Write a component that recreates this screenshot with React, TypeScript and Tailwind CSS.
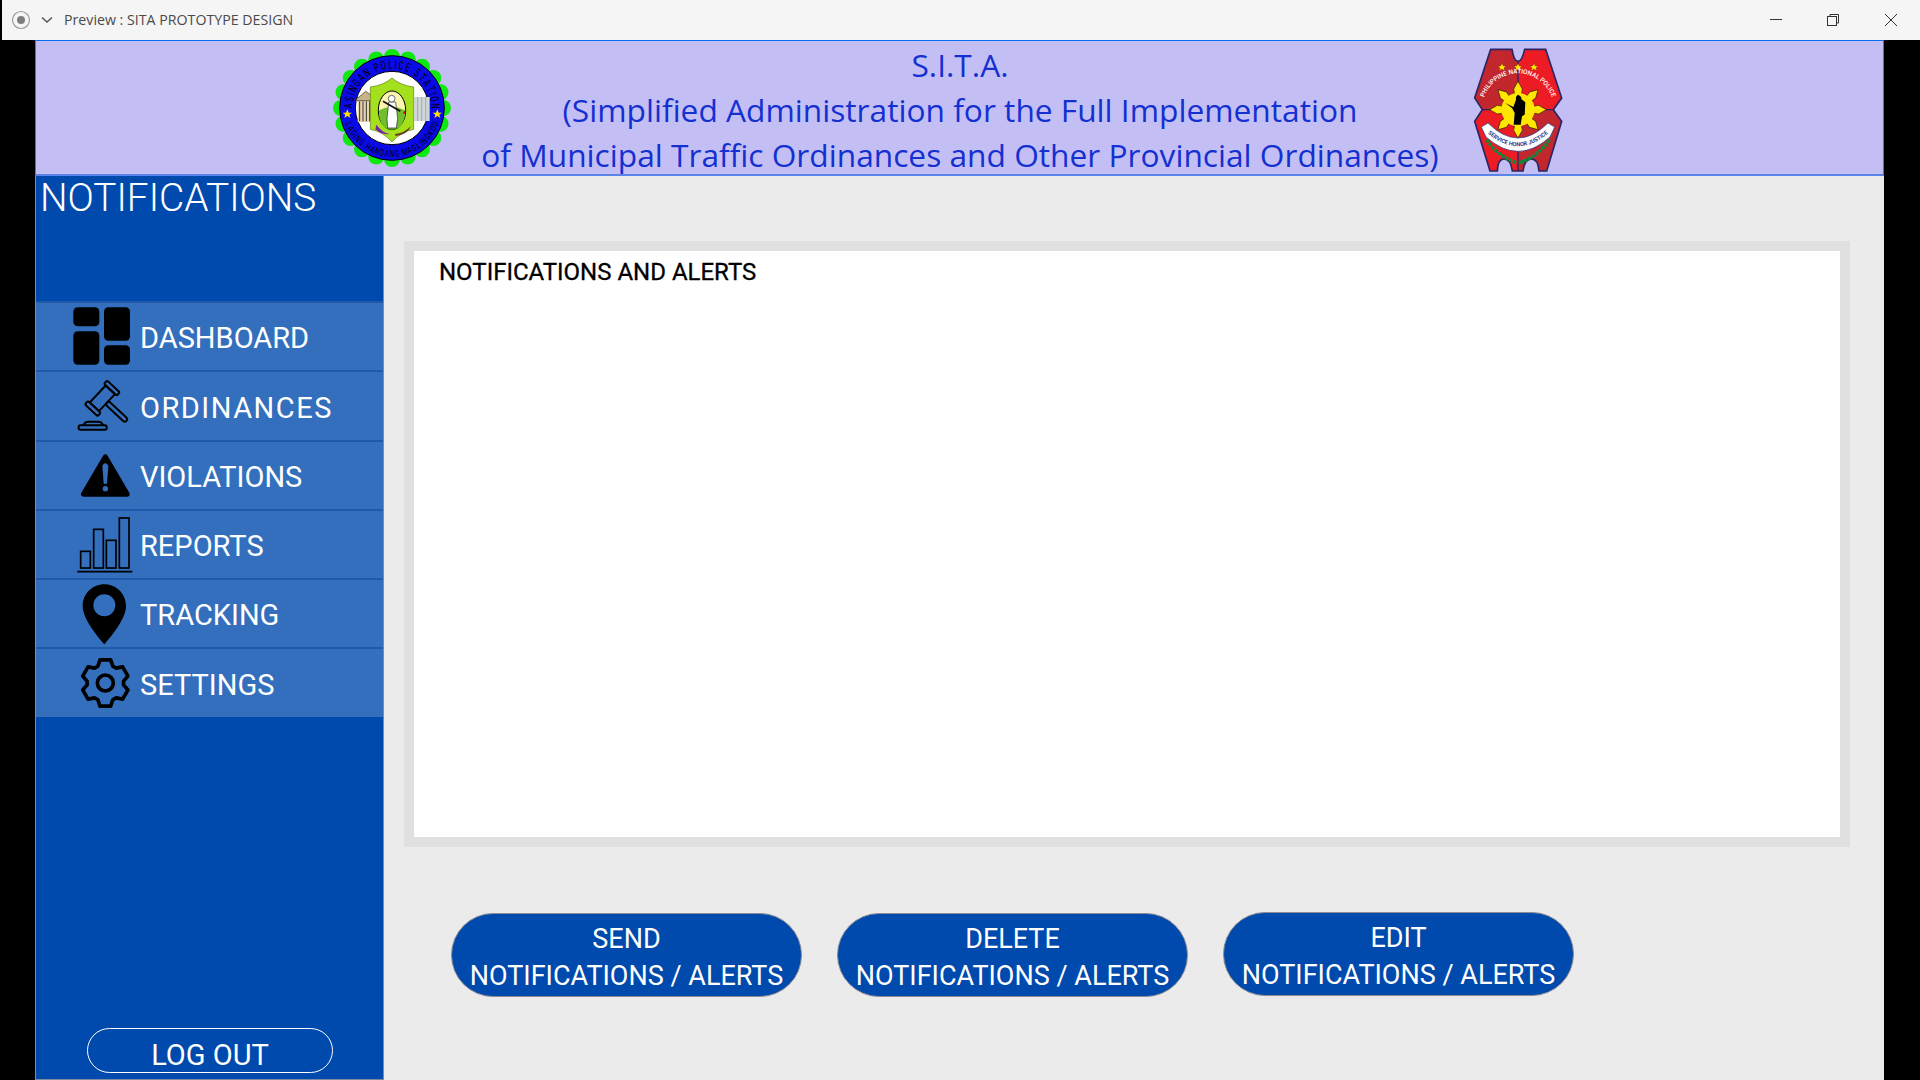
import React from "react";

const ROW = "#336fbd";

function gearPoints() {
  const pts: string[] = [];
  const cx = 226, cy = 546, ri = 55, ro = 71;
  for (let i = 0; i < 6; i++) {
    const a = -90 + 60 * i;
    for (const [d, r] of [[-24, ri], [-13, ro], [13, ro], [24, ri]] as const) {
      const t = ((a + d) * Math.PI) / 180;
      pts.push(`${(cx + r * Math.cos(t)).toFixed(1)},${(cy + r * Math.sin(t)).toFixed(1)}`);
    }
  }
  return pts.join(" ");
}

const Dashboard = () => (
  <svg className="w-[104px] h-[67px] shrink-0" viewBox="18 39 312 201">
    <rect x="130" y="52" width="78" height="57" rx="13" />
    <rect x="130" y="124" width="78" height="100" rx="13" />
    <rect x="222" y="52" width="78" height="100" rx="13" />
    <rect x="222" y="166" width="78" height="58" rx="13" />
  </svg>
);

const Gavel = () => (
  <svg className="w-[104px] h-[67px] shrink-0" viewBox="18 246 312 201" fill="none" stroke="#000" strokeWidth="6">
    <g transform="translate(217 325) rotate(43)">
      <rect x="-26" y="-49" width="52" height="14" rx="5" />
      <rect x="-26" y="35" width="52" height="14" rx="5" />
      <rect x="-19" y="-35" width="38" height="70" />
      <rect x="19" y="-7" width="80" height="14" rx="7" />
    </g>
    <rect x="146" y="406" width="84" height="13" rx="5" />
    <path d="M160 406 Q164 395 176 395 H204 Q216 395 219 406" />
  </svg>
);

const Warning = () => (
  <svg className="w-[104px] h-[67px] shrink-0" viewBox="18 453 312 201">
    <polygon points="226,498 161,609 291,609" stroke="#000" strokeWidth="16" strokeLinejoin="round" />
    <path d="M217 524 Q226 510 235 524 L231 578 H221 Z" fill={ROW} />
    <circle cx="226" cy="593" r="8" fill={ROW} />
  </svg>
);

const Bars = () => (
  <svg className="w-[104px] h-[67px] shrink-0" viewBox="18 30 312 201" fill="none" stroke="#000" strokeWidth="5">
    <rect x="152" y="151" width="29" height="50" />
    <rect x="191" y="85" width="29" height="116" />
    <rect x="229" y="118" width="29" height="83" />
    <rect x="268" y="51" width="29" height="150" />
    <path d="M142 212 H307" />
  </svg>
);

const Pin = () => (
  <svg className="w-[104px] h-[67px] shrink-0" viewBox="18 237 312 201">
    <path d="M223 250 C259 250 288 279 288 315 C288 355 240 410 223 430 C206 410 158 355 158 315 C158 279 187 250 223 250 Z" />
    <circle cx="223" cy="313" r="33" fill={ROW} />
  </svg>
);

const Gear = () => (
  <svg className="w-[104px] h-[67px] shrink-0" viewBox="18 444 312 201" fill="none" stroke="#000" strokeWidth="11" strokeLinejoin="round">
    <polygon points={gearPoints()} />
    <circle cx="226" cy="546" r="24" />
  </svg>
);

const menu: [string, React.ReactNode, string][] = [
  ["DASHBOARD", <Dashboard />, ""],
  ["ORDINANCES", <Gavel />, "tracking-[1.5px]"],
  ["VIOLATIONS", <Warning />, ""],
  ["REPORTS", <Bars />, ""],
  ["TRACKING", <Pin />, ""],
  ["SETTINGS", <Gear />, ""],
];

function scallops() {
  const out: React.ReactNode[] = [];
  for (let i = 0; i < 20; i++) {
    const t = (i * 18 * Math.PI) / 180;
    out.push(<circle key={i} cx={215 + 153 * Math.cos(t)} cy={198 + 153 * Math.sin(t)} r="24" fill="#0ee80e" />);
  }
  return out;
}

// Real text, one letter at a time around a circle, narrowed with scaleX as on the badge.
function ArcLetters({ text, cx, cy, r, span, size, sx, bottom, weight, fill }: {
  text: string; cx: number; cy: number; r: number; span: number; size: number; sx: number; bottom?: boolean; weight: number; fill: string;
}) {
  const wt = (c: string) => (c === " " ? 0.55 : c === "I" ? 0.5 : 1);
  const chars = text.split("");
  const total = chars.reduce((s, c) => s + wt(c), 0);
  let acc = 0;
  return (
    <g fontFamily="Roboto" fontWeight={weight} fontSize={size} fill={fill} textAnchor="middle">
      {chars.map((c, i) => {
        const mid = acc + wt(c) / 2;
        acc += wt(c);
        const phi = (mid / total - 0.5) * span;
        const tr = bottom
          ? `rotate(${-phi} ${cx} ${cy}) translate(${cx} ${cy + r}) scale(${sx} 1)`
          : `rotate(${phi} ${cx} ${cy}) translate(${cx} ${cy - r}) scale(${sx} 1)`;
        return c === " " ? null : <text key={i} transform={tr}>{c}</text>;
      })}
    </g>
  );
}

const StationLogo = () => (
  <svg className="w-[118px] h-[118px] shrink-0" viewBox="38 21 354 354">
    {scallops()}
    <circle cx="215" cy="198" r="157" fill="#0a0ae6" stroke="#000" strokeWidth="3" />
    <circle cx="215" cy="198" r="110" fill="#fff" stroke="#000" strokeWidth="3" />
    <ArcLetters text="ASINGAN POLICE STATION" cx={215} cy={198} r={118} span={184} size={36} sx={0.62} weight={400} fill="#000" />
    <ArcLetters text="LAGING HANDANG MAGLINGKOD" cx={215} cy={198} r={147} span={146} size={28} sx={0.68} bottom weight={400} fill="#000" />
    <polygon points="81,202 85,212 95,212 87,218 90,228 81,222 72,228 75,218 67,212 77,212" fill="#ffe100" />
    <polygon points="351,202 355,212 365,212 357,218 360,228 351,222 342,228 345,218 337,212 347,212" fill="#ffe100" />
    <rect x="112" y="170" width="50" height="70" fill="#e9d6b0" />
    <path d="M108 172 L136 148 L160 165 V176 H108 Z" fill="#c9b48a" stroke="#333" strokeWidth="2" />
    <path d="M118 178 V238 M128 178 V238 M138 178 V238 M148 178 V238" stroke="#333" strokeWidth="3" />
    <rect x="282" y="165" width="46" height="72" fill="#cfd6d8" />
    <path d="M292 165 V237 M304 165 V237 M316 165 V237" stroke="#8b9699" strokeWidth="2" />
    <path d="M150 135 Q190 130 215 108 Q240 130 280 135 V262 Q240 270 215 300 Q190 270 150 262 Z" fill="#a4e01c" stroke="#5b7c10" strokeWidth="2" />
    <ellipse cx="215" cy="205" rx="41" ry="58" fill="#fdf6b0" stroke="#000" strokeWidth="3" />
    <path d="M176 205 Q215 185 254 205 Q254 263 215 263 Q176 263 176 205 Z" fill="#6fc02c" />
    <path d="M205 180 L226 180 L232 230 L228 258 H202 L200 230 Z" fill="#fff" stroke="#222" strokeWidth="2" />
    <circle cx="214" cy="170" r="10" fill="#fff" stroke="#222" strokeWidth="2" />
    <path d="M188 178 L240 208" stroke="#111" strokeWidth="5" />
    <circle cx="252" cy="212" r="4" fill="#e01010" />
    <path d="M168 248 Q185 272 208 276 Q185 280 165 262 Z" fill="#7a1fa8" />
    <path d="M224 276 Q250 275 272 252 Q262 278 226 282 Z" fill="#6b3d1c" />
  </svg>
);

const pnpRays = () => {
  const out: React.ReactNode[] = [];
  for (let i = 0; i < 8; i++) {
    out.push(
      <g key={i} transform={`rotate(${i * 45} 352 330)`}>
        <polygon points="352,245 365,268 362,285 342,285 339,268" fill="#ffe600" stroke="#2b1c00" strokeWidth="2" />
      </g>
    );
  }
  return out;
};

const Star = ({ x }: { x: number }) => (
  <polygon
    points={`${x},191 ${x + 4},199 ${x + 12},199 ${x + 6},205 ${x + 8},213 ${x},208 ${x - 8},213 ${x - 6},205 ${x - 12},199 ${x - 4},199`}
    fill="#ffe600"
    stroke="#6a1a1a"
    strokeWidth="1"
  />
);

const SHIELD = "M270 149 H334 Q340 185 352 185 Q364 185 372 149 H435 L483 295 L458 330 L483 365 L438 514 H415 Q412 478 392 478 Q372 478 367 514 H335 Q330 478 310 478 Q292 478 290 514 H268 L222 365 L245 330 L222 295 Z";

const PnpLogo = () => (
  <svg className="w-[90px] h-[126px] shrink-0" viewBox="217 142 270 378">
    <defs>
      <clipPath id="shield">
        <path d={SHIELD} />
      </clipPath>
      <path id="pnpArc" d="M248 300 A 108 108 0 0 1 456 300" />
      <path id="pnpBanner" d="M258 398 Q352 482 446 398" />
    </defs>
    <g clipPath="url(#shield)">
      <rect x="217" y="142" width="135" height="188" fill="#c1272d" />
      <rect x="352" y="142" width="135" height="188" fill="#ed1c24" />
      <rect x="217" y="330" width="135" height="190" fill="#ed1c24" />
      <rect x="352" y="330" width="135" height="190" fill="#c1272d" />
      <path d="M352 142 V520 M217 330 H487" stroke="#2a2466" strokeWidth="4" />
    </g>
    <path d={SHIELD} fill="none" stroke="#2a2466" strokeWidth="5" />
    <Star x={304} />
    <Star x={352} />
    <Star x={400} />
    <text fontFamily="Roboto" fontWeight="500" fontSize="19" fill="#fff">
      <textPath href="#pnpArc" startOffset="50%" textAnchor="middle">PHILIPPINE NATIONAL POLICE</textPath>
    </text>
    {pnpRays()}
    <circle cx="352" cy="330" r="50" fill="#ffe600" />
    <path d="M352 285 Q364 290 362 298 L374 308 L372 345 L364 350 L360 375 H339 L342 340 L334 325 L314 310 L338 322 L346 300 Q344 290 352 285 Z" fill="#000" />
    <path d="M242 382 L262 370 Q352 460 442 370 L462 382 L448 412 Q352 498 256 412 Z" fill="#fff" stroke="#1f3a8a" strokeWidth="2" />
    <text fontFamily="Roboto" fontWeight="700" fontSize="17" fill="#1f3a8a">
      <textPath href="#pnpBanner" startOffset="50%" textAnchor="middle">SERVICE HONOR JUSTICE</textPath>
    </text>
    <path d="M258 420 Q290 470 350 490 M446 420 Q414 470 354 490" fill="none" stroke="#0b8a3a" strokeWidth="10" strokeDasharray="10 3" />
  </svg>
);

const ActionButton = ({ word, cls }: { word: string; cls: string }) => (
  <button className={`w-[351px] h-[84px] pt-[5px] rounded-[42px] bg-[#004aad] text-white text-[27px] leading-[36.5px] text-center font-['Roboto',sans-serif] border border-[#8d8d96] whitespace-nowrap ${cls}`}>
    {word}
    <br />
    NOTIFICATIONS / ALERTS
  </button>
);

export default function App() {
  return (
    <div className="w-[1920px] h-[1080px] bg-black overflow-hidden flex flex-col pl-[2px] font-['Roboto',sans-serif]">
      <div className="h-10 shrink-0 bg-[#f5f5f5] flex items-center pl-[9px] text-[#444444]">
        <svg className="w-[20px] h-[20px]" viewBox="0 0 20 20">
          <circle cx="10" cy="10" r="8.5" fill="none" stroke="#9a9a9a" strokeWidth="1.2" />
          <circle cx="10" cy="10" r="4" fill="#7d7d7d" />
        </svg>
        <svg className="w-[14px] h-[14px] ml-[9px]" viewBox="0 0 14 14" fill="none" stroke="#555555" strokeWidth="1.5">
          <path d="M2 4.5 L7 9 L12 4.5" />
        </svg>
        <span className="ml-[10px] text-[14.2px] font-['Open_Sans',sans-serif] text-[#4a4a4a]">Preview : SITA PROTOTYPE DESIGN</span>
        <div className="ml-auto flex items-center text-[#222222]">
          <svg className="w-[14px] h-[14px] mr-[43px]" viewBox="0 0 14 14" stroke="#333333" fill="none"><path d="M1 6.5 H13" /></svg>
          <svg className="w-[14px] h-[14px] mr-[44px]" viewBox="0 0 14 14" stroke="#333333" fill="none"><rect x="1.5" y="3.5" width="9" height="9" /><path d="M4 3.5 V1.5 H12.5 V10 H10.5" /></svg>
          <svg className="w-[14px] h-[14px] mr-[22px]" viewBox="0 0 14 14" stroke="#333333" fill="none"><path d="M1 1 L13 13 M13 1 L1 13" /></svg>
        </div>
      </div>
      <div className="ml-[33px] w-[1849px] flex-1 flex flex-col min-h-0">
        <header className="h-[136px] shrink-0 bg-[#c3bff5] border-t border-t-[#0a6cf0] border-x border-x-[#3d74e8] border-b-2 border-b-[#5b84e8] flex items-center pl-[297px]">
          <StationLogo />
          <div className="w-[976px] ml-[21px] pt-[4px] text-center text-[#1430d0] text-[31.7px] font-medium leading-[45px] whitespace-nowrap font-['Open_Sans',sans-serif]">
            <div>S.I.T.A.</div>
            <div>(Simplified Administration for the Full Implementation</div>
            <div>of Municipal Traffic Ordinances and Other Provincial Ordinances)</div>
          </div>
          <div className="ml-[25px] pt-[4px]">
            <PnpLogo />
          </div>
        </header>
        <div className="flex-1 flex min-h-0 bg-[#ebebeb]">
          <aside className="w-[349px] shrink-0 bg-[#004aad] border-x border-x-[#7f8aa0] border-b border-b-[#7f8aa0] flex flex-col">
            <h1 className="text-white text-[38.8px] leading-[44px] pl-[4px] h-[125px] font-light">NOTIFICATIONS</h1>
            {menu.map(([label, icon, cls]) => (
              <div key={label} className="h-[69.25px] bg-[#336fbd] border-t-2 border-t-[#2059a8] flex items-center">
                {icon}
                <span className={`text-white text-[29px] pt-[5px] ${cls}`}>{label}</span>
              </div>
            ))}
            <div className="mt-auto mb-[6px] ml-[51px] w-[246px] h-[45px] rounded-[23px] border border-white text-white text-[29px] leading-[52px] text-center overflow-hidden">LOG OUT</div>
          </aside>
          <main className="flex-1 flex flex-col pl-[20px]">
            <section className="mt-[65px] w-[1446px] h-[606px] bg-white border-[10px] border-[#e0e0e0] pl-[25px] pt-[3px]">
              <h2 className="text-[24px] leading-[36px] font-normal [-webkit-text-stroke:0.3px_#000] text-[#000000]">NOTIFICATIONS AND ALERTS</h2>
            </section>
            <div className="mt-[66px] ml-[47px] flex items-start gap-[35px]">
              <ActionButton word="SEND" cls="" />
              <ActionButton word="DELETE" cls="" />
              <ActionButton word="EDIT" cls="-mt-px" />
            </div>
          </main>
        </div>
      </div>
    </div>
  );
}
